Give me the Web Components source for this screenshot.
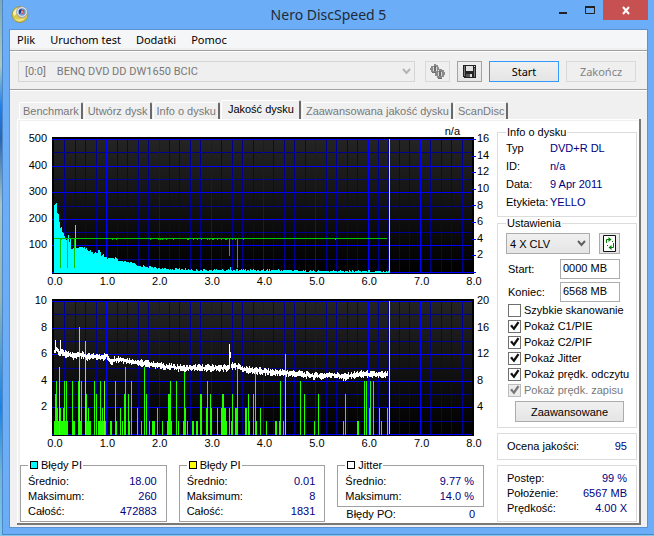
<!DOCTYPE html>
<html lang="pl">
<head>
<meta charset="utf-8">
<title>Nero DiscSpeed 5</title>
<style>
  html {
    --frame: #6badf6;
    --face: #f0f0f0;
    --value: #000080;
    --muted: #787878;
    --line: #dcdcdc;
    --ui: "Noto Sans", "Open Sans", sans-serif;
    --small: "Liberation Sans", Arial, sans-serif;
  }
  body {
    background: linear-gradient(#7aa9bb, #a9c9c0 12%, #1b7ff0 20%, #2a65b0 26%, #a4c4c6 38%, #8fb5b8 56%, #1584ea 76%, #6db3d6 88%, #7cc8ee);
    font: 11px/14px var(--small);
    margin: 0;
  }
</style>
</head>
<body>
<disc-window></disc-window>

<script>
class DiscWindow extends HTMLElement {
  connectedCallback() {
    this.attachShadow({ mode: "open" }).innerHTML = `
    <style>
    :host {
      background: var(--frame);
      border-bottom: 1px solid #4f86c4;
      border-left: 1px solid #4f86c4;
      box-sizing: border-box;
      display: flex;
      flex-direction: column;
      margin: 0 0 1px 2px;
      min-height: calc(100vh - 1px);
      padding: 0 6px 6px;
    }
    .client {
      background: var(--face);
      border: 1px solid #5c92d0;
      display: flex;
      flex: 1;
      flex-direction: column;
    }
    .page {
      background: #fff;
      border-bottom: 2px solid #787878;
      border-right: 2px solid #787878;
      box-shadow: inset 1px 1px #fff, inset 3px 2px var(--face);
      display: flex;
      flex: 1;
      gap: 7px;
      margin: 0 6px 2px 7px;
      padding: 2px 2px 1px 3px;
    }
    .results {
      flex: 1;
    }
    .caption {
      line-height: 16px;
      padding: 2px 30px 0 0;
      text-align: right;
      height: 14px;
    }
    .totals {
      display: grid;
      gap: 12px;
      grid-template-columns: repeat(3, 1fr);
      margin: 9px 6px 0 0;
    }
    .failures {
      padding: 0 9px;
    }
    scan-chart + scan-chart {
      margin-top: 11px;
    }
    </style>
    <title-bar></title-bar>
    <div class="client">
      <menu-bar></menu-bar>
      <drive-bar></drive-bar>
      <tab-strip></tab-strip>
      <main class="page">
        <div class="results">
          <div class="caption">n/a</div>
          <scan-chart kind="pie" left="500,400,300,200,100" right="16,14,12,10,8,6,4,2"></scan-chart>
          <scan-chart kind="pif" left="10,8,6,4,2" right="20,16,12,8,4"></scan-chart>
          <div class="totals">
            <group-box swatch="#00ffff">
              <span slot="title">Błędy PI</span>
              <value-row label="Średnio:">18.00</value-row>
              <value-row label="Maksimum:">260</value-row>
              <value-row label="Całość:">472883</value-row>
            </group-box>
            <group-box swatch="#ffff00">
              <span slot="title">Błędy PI</span>
              <value-row label="Średnio:">0.01</value-row>
              <value-row label="Maksimum:">8</value-row>
              <value-row label="Całość:">1831</value-row>
            </group-box>
            <div>
              <group-box swatch="#ffffff">
                <span slot="title">Jitter</span>
                <value-row label="Średnio:">9.77 %</value-row>
                <value-row label="Maksimum:">14.0 %</value-row>
              </group-box>
              <div class="failures"><value-row label="Błędy PO:">0</value-row></div>
            </div>
          </div>
        </div>
        <side-panel></side-panel>
      </main>
    </div>
  `;
  }
}

class TitleBar extends HTMLElement {
  connectedCallback() {
    this.attachShadow({ mode: "open" }).innerHTML = `
    <style>
    :host {
      align-items: start;
      color: #1f2a38;
      display: grid;
      grid-template-columns: 1fr auto 1fr;
      height: 29px;
    }
    .logo {
      height: 18px;
      margin: 5px 0 0 2px;
      width: 18px;
    }
    h1 {
      font: 400 14px/30px var(--ui);
      margin: 0;
    }
    .controls {
      display: flex;
      justify-content: flex-end;
    }
    button {
      background: none;
      border: 0;
      height: 20px;
      padding: 0;
      width: 27px;
    }
    .close {
      background: #c75050;
      width: 45px;
    }
    svg {
      display: block;
      margin: auto;
    }
    </style>
    <svg class="logo" viewBox="0 0 18 18">
      <circle cx="9" cy="9.500" r="8" fill="#d9c84a" stroke="#8c7f2c" stroke-width=".6"/>
      <path d="M2 8a7 7 0 0 1 6-5l-1 5-4 3z" fill="#f7f0a8"/>
      <path d="M3 13q4 3 11 0-4 5-9 2z" fill="#f2ea9c"/>
      <circle cx="11" cy="7" r="5.400" fill="#e6e9f2" stroke="#8890a8" stroke-width=".8"/>
      <circle cx="11" cy="7" r="3.800" fill="#7595d3"/>
      <path d="M8 5l3-1-1 4-2 1z" fill="#203c8e"/>
      <path d="M10 5l3 0-1 4-2-1z" fill="#d43d37"/>
      <path d="M13 5l1 2-2 3z" fill="#46a58d"/>
      <circle cx="11" cy="7" r=".8" fill="#fff"/>
    </svg>
    <h1>Nero DiscSpeed 5</h1>
    <div class="controls">
      <button aria-label="Minimalizuj"><svg width="8" height="20"><path d="M0 13h8" stroke="#222" stroke-width="2"/></svg></button>
      <button aria-label="Maksymalizuj"><svg width="10" height="20"><path d="M.5 7v6.500h9V7" fill="none" stroke="#222"/><path d="M0 7h10" stroke="#222" stroke-width="2"/></svg></button>
      <button class="close" aria-label="Zamknij"><svg width="8" height="20"><path d="M1 7l6 7M7 7l-6 7" stroke="#fff" stroke-width="2"/></svg></button>
    </div>
  `;
  }
}

class MenuBar extends HTMLElement {
  connectedCallback() {
    this.attachShadow({ mode: "open" }).innerHTML = `
    <style>
    :host {
      background: #f5f6f7;
      border-bottom: 1px solid #a0a0a0;
      box-shadow: inset 0 -2px #eeeff0;
      display: flex;
      gap: 15px;
      padding: 0 7px;
    }
    button {
      background: none;
      border: 0;
      color: #000;
      font: 11px/20px var(--ui);
      padding: 0;
    }
    </style>
    <button>Plik</button>
    <button>Uruchom test</button>
    <button>Dodatki</button>
    <button>Pomoc</button>
  `;
  }
}

class DriveBar extends HTMLElement {
  connectedCallback() {
    this.attachShadow({ mode: "open" }).innerHTML = `
    <style>
    :host {
      border-bottom: 1px solid #a0a0a0;
      border-top: 1px solid #fff;
      box-shadow: 0 1px #fff;
      display: flex;
      font-family: var(--ui);
      gap: 7px;
      padding: 9px 11px 7px 8px;
    }
    .drive {
      display: grid;
      flex: 1;
      margin-right: 3px;
    }
    .drive > * {
      grid-area: 1 / 1;
    }
    select {
      appearance: none;
      background: #efefef;
      border: 1px solid #d5d5d5;
      color: var(--muted);
      font: 11px/19px Roboto, sans-serif;
      height: 21px;
      opacity: 1;
      padding: 0 6px;
      white-space: pre;
    }
    .arrow {
      align-self: center;
      justify-self: end;
      margin-right: 4px;
      pointer-events: none;
    }
    button {
      background: linear-gradient(#f0f0f0, #e5e5e5);
      border: 1px solid #a3a3a3;
      box-sizing: border-box;
      color: #000;
      font: 11px/19px var(--ui);
      height: 21px;
      padding: 0;
      width: 25px;
    }
    button:disabled {
      background: #efefef;
      border-color: #d9d9d9;
      color: #838383;
    }
    .wide {
      width: 70px;
    }
    .start {
      border-color: #3399ff;
    }
    svg {
      display: block;
      margin: auto;
    }
    </style>
    <div class="drive">
      <select aria-label="Napęd" disabled><option>[0:0]&nbsp;&nbsp;&nbsp; BENQ DVD DD DW1650 BCIC</option></select>
      <svg class="arrow" width="9" height="7"><path d="M1 1l3.500 4L8 1" fill="none" stroke="#b4b4b4" stroke-width="2"/></svg>
    </div>
    <button disabled aria-label="Opcje">
      <svg width="17" height="17" viewBox="0 0 17 17" shape-rendering="crispEdges">
        <path d="M5 1h2v1h2v2h1v2l-1 3-2 1H4V9H2V7H1V5h1V3h3z" fill="#8a8a8a"/>
        <path d="M10 6h3v1h2v2h1v3h-1v2h-2v2h-3v-1H8v-2H6v-3h1V8h3z" fill="#8a8a8a"/>
        <path d="M4 4h1v4H4zM7 4h1v4H7zM9 9h1v4H9zM12 9h1v4h-1z" fill="#d8d8d8"/>
        <path d="M5 3h2v5H5zM10 8h2v5h-2zM3 9h4v1H3zM9 15h4v1H9z" fill="#6d6d6d"/>
      </svg>
    </button>
    <button aria-label="Zapisz">
      <svg width="13" height="13" viewBox="0 0 13 13" shape-rendering="crispEdges">
        <path d="M0 0h13v13H1v-1H0z" fill="#222"/>
        <path d="M1 1h1v10H1zM11 3h1v9h-1z" fill="#777"/>
        <path d="M3 1h7v5H3zM11 1h1v1h-1z" fill="#e2e2e2"/>
        <path d="M3 9h6v3H3z" fill="#555"/>
        <path d="M7 9h2v3H7z" fill="#ddd"/>
      </svg>
    </button>
    <button class="wide start">Start</button>
    <button class="wide" disabled>Zakończ</button>
  `;
  }
}

class TabStrip extends HTMLElement {
  connectedCallback() {
    this.attachShadow({ mode: "open" }).innerHTML = `
    <style>
    :host {
      align-items: flex-end;
      display: flex;
      gap: 1px;
      padding: 10px 8px 0 9px;
    }
    button {
      background: var(--face);
      border: solid;
      border-color: #fff #696969 #fff #fff;
      border-width: 1px 2px 0 1px;
      border-radius: 2px 2px 0 0;
      color: var(--muted);
      font: 11px/16px var(--small);
      padding: 0 2px 0 3px;
      white-space: nowrap;
    }
    [aria-selected="true"] {
      color: #000;
      padding: 0 5px 2px 6px;
    }
    </style>
    <button role="tab">Benchmark</button>
    <button role="tab">Utwórz dysk</button>
    <button role="tab">Info o dysku</button>
    <button role="tab" aria-selected="true">Jakość dysku</button>
    <button role="tab">Zaawansowana jakość dysku</button>
    <button role="tab">ScanDisc</button>
  `;
  }
}

class GroupBox extends HTMLElement {
  connectedCallback() {
    const swatch = this.getAttribute("swatch");
    this.attachShadow({ mode: "open" }).innerHTML = `
    <style>
    :host {
      display: block;
    }
    fieldset {
      border: 1px solid ${swatch ? "#a0a0a0" : "var(--line)"};
      margin: 0;
      min-width: 0;
      padding: ${swatch ? "3px 9px 2px 7px" : "1px 8px 5px"};
    }
    legend {
      align-items: center;
      display: flex;
      gap: 3px;
      height: 12px;
      line-height: 12px;
      padding: 0 1px;
    }
    i {
      background: ${swatch};
      border: 1px solid #000;
      height: 6px;
      margin-left: 1px;
      width: 6px;
    }
    </style>
    <fieldset>
      <legend>${swatch ? "<i></i>" : ""}<slot name="title"></slot></legend>
      <slot></slot>
    </fieldset>
  `;
  }
}

class ValueRow extends HTMLElement {
  connectedCallback() {
    this.attachShadow({ mode: "open" }).innerHTML = `
    <style>
    :host {
      display: flex;
      justify-content: space-between;
      line-height: 15px;
    }
    .value {
      color: var(--value);
    }
    </style>
    <span>${this.getAttribute("label")}</span>
    <span class="value"><slot></slot></span>
  `;
  }
}

class CheckOption extends HTMLElement {
  connectedCallback() {
    const state = ["checked", "disabled"].filter((name) => this.hasAttribute(name)).join(" ");
    this.attachShadow({ mode: "open" }).innerHTML = `
    <style>
    :host {
      display: block;
      white-space: nowrap;
    }
    label {
      align-items: center;
      display: flex;
      gap: 3px;
      line-height: 16px;
    }
    input {
      appearance: none;
      background: #fff;
      border: 1px solid #707070;
      box-sizing: border-box;
      flex: none;
      height: 13px;
      margin: 0;
      width: 13px;
    }
    input:checked::before {
      background: #111;
      clip-path: polygon(10% 50%, 28% 36%, 42% 58%, 78% 8%, 95% 20%, 46% 92%);
      content: "";
      display: block;
      height: 11px;
      width: 11px;
    }
    input:disabled {
      background: #ececec;
      border-color: #bcbcbc;
    }
    input:disabled::before {
      background: #777;
    }
    input:disabled + span {
      color: var(--muted);
    }
    </style>
    <label><input type="checkbox" ${state}><span><slot></slot></span></label>
  `;
  }
}

class SidePanel extends HTMLElement {
  connectedCallback() {
    this.attachShadow({ mode: "open" }).innerHTML = `
    <style>
    :host {
      display: block;
      padding-top: 5px;
      width: 140px;
    }
    dl {
      display: grid;
      grid-template-columns: 44px 1fr;
      line-height: 18px;
      margin: 0;
    }
    dd {
      color: var(--value);
      margin: 0;
    }
    .speed {
      display: flex;
      gap: 9px;
      margin-top: 3px;
    }
    .pick {
      display: grid;
      width: 84px;
    }
    .pick > * {
      grid-area: 1 / 1;
    }
    select, button, input {
      background: linear-gradient(#f0f0f0, #e5e5e5);
      border: 1px solid #acacac;
      box-sizing: border-box;
      color: #000;
      font: 11px/14px var(--small);
      height: 21px;
      padding: 0 3px;
    }
    select {
      appearance: none;
    }
    .arrow {
      align-self: center;
      justify-self: end;
      margin-right: 4px;
      pointer-events: none;
    }
    .refresh {
      padding: 0;
      width: 21px;
    }
    .refresh svg {
      display: block;
      margin: auto;
    }
    .range {
      align-items: center;
      display: grid;
      gap: 3px 0;
      grid-template-columns: 52px 60px;
      margin: 5px 0 0 2px;
    }
    input {
      background: #fff;
      height: 20px;
      padding: 0 2px 2px;
    }
    .options {
      margin: 0 0 0 2px;
    }
    .more {
      display: block;
      margin: 3px 4px 0 9px;
      width: 109px;
    }
    .box {
      border: 1px solid var(--line);
      margin-top: 5px;
      padding: 5px 9px;
    }
    </style>
    <group-box>
      <span slot="title">Info o dysku</span>
      <dl>
        <dt>Typ</dt><dd>DVD+R DL</dd>
        <dt>ID:</dt><dd>n/a</dd>
        <dt>Data:</dt><dd>9 Apr 2011</dd>
        <dt>Etykieta:</dt><dd>YELLO</dd>
      </dl>
    </group-box>
    <group-box>
      <span slot="title">Ustawienia</span>
      <div class="speed">
        <div class="pick">
          <select aria-label="Prędkość"><option>4 X CLV</option></select>
          <svg class="arrow" width="9" height="7"><path d="M1 1l3.500 4L8 1" fill="none" stroke="#606060" stroke-width="2"/></svg>
        </div>
        <button class="refresh" aria-label="Odśwież">
          <svg width="15" height="17" viewBox="0 0 15 17">
            <path d="M1.500 .5h12v16h-12z" fill="#fff" stroke="#111"/>
            <path d="M4.500 8V4.500H7M11.500 8v4.500H9" fill="none" stroke="#008000"/>
            <path d="M6.500 2v5l3-2.500zM9.500 10v5l-3-2.500z" fill="#008000"/>
            <path d="M10 6h1v1h-1zM5 10h1v1H5z" fill="#008000"/>
          </svg>
        </button>
      </div>
      <div class="range">
        <label for="from">Start:</label><input id="from" value="0000 MB">
        <label for="to">Koniec:</label><input id="to" value="6568 MB">
      </div>
      <div class="options">
        <check-option>Szybkie skanowanie</check-option>
        <check-option checked>Pokaż C1/PIE</check-option>
        <check-option checked>Pokaż C2/PIF</check-option>
        <check-option checked>Pokaż Jitter</check-option>
        <check-option checked>Pokaż prędk. odczytu</check-option>
        <check-option checked disabled>Pokaż prędk. zapisu</check-option>
      </div>
      <button class="more">Zaawansowane</button>
    </group-box>
    <div class="box">
      <value-row label="Ocena jakości:">95</value-row>
    </div>
    <div class="box">
      <value-row label="Postęp:">99 %</value-row>
      <value-row label="Położenie:">6567 MB</value-row>
      <value-row label="Prędkość:">4.00 X</value-row>
    </div>
  `;
  }
}

// Outline of the PI error area, as x,y pairs in plot units
const PIE = [2,68, 3,67, 4,66, 5,76, 6,77, 7,85, 8,91, 9,90, 10,95, 11,96, 12,99, 14,103, 16,98, 17,105, 18,102, 19,112, 21,111, 24,112, 28,111, 30,109, 33,112, 38,113, 41,116, 45,115, 47,113, 49,120, 51,118, 55,121, 58,122, 63,121, 66,124, 73,125, 80,126, 85,129, 91,129, 98,130, 105,131, 115,132, 128,132, 141,133, 232,133, 258,134, 337,134];

// Centre line of the jitter trace
const JITTER = [2,52, 3,44, 4,50, 6,53, 7,53, 8,43, 9,53, 12,55, 21,57, 26,55, 35,58, 48,58, 54,57, 58,62, 65,60, 81,63, 98,65, 115,68, 131,69, 175,69, 176,68, 177,47, 178,57, 179,67, 185,67, 190,70, 215,73, 231,74, 248,75, 261,77, 281,76, 291,78, 308,75, 335,76];

// PIF bars, x:height
const PIF = "2:1 3:3 4:4 5:2 6:1 7:5 8:2 9:1 10:1 11:2 12:4 13:1 14:4 15:1 20:4 21:1 22:1 26:4 27:8 28:1 29:4 33:7 34:3 35:1 36:2 37:1 38:1 42:4 44:3 46:1 47:1 48:4 49:1 50:2 51:1 52:4 53:1 58:1 59:1 63:4 64:1 68:2 70:1 72:3 73:5 76:3 77:1 79:4 85:2 89:1 92:5 94:3 97:1 100:1 101:1 102:1 105:2 110:1 115:1 116:3 117:3 118:4 119:1 124:4 126:1 131:1 132:5 133:2 135:1 140:1 141:1 144:1 145:1 148:3 149:3 154:2 155:4 158:3 159:2 165:2 169:2 170:3 171:3 172:2 173:2 174:1 177:2 179:1 180:3 183:2 184:2 185:5 193:2 194:2 196:3 197:1 201:3 203:5 204:1 208:2 214:1 223:1 224:1 227:1 228:4 231:1 233:6 248:4 252:3 262:1 266:3 291:1 293:3 305:1 306:1 312:4 314:4 317:2 318:4 321:4 327:2 329:1 335:2";

function valueAt(points, x) {
  let i = 0;
  while (i < points.length - 4 && points[i + 2] < x) i += 2;
  const [x0, y0, x1, y1] = points.slice(i, i + 4);
  return y0 + ((y1 - y0) * (x - x0)) / (x1 - x0);
}

function noise(x) {
  const n = Math.sin(x * 12.9898) * 43758.5453;
  return n - Math.floor(n);
}

function bar(x, top, bottom) {
  return `M${x} ${top}h1V${bottom}h-1z`;
}

class ScanChart extends HTMLElement {
  connectedCallback() {
    const pie = this.getAttribute("kind") === "pie";
    const cells = (list) => list.split(",").map((text) => `<span>${text}</span>`).join("");
    this.attachShadow({ mode: "open" }).innerHTML = `
    <style>
    :host {
      display: grid;
      grid-template-columns: 32px 1fr 16px;
    }
    svg {
      display: block;
      height: 137px;
      overflow: visible;
      width: 100%;
    }
    .axis {
      display: flex;
      flex-direction: column;
      height: 133px;
      margin-top: -6px;
    }
    .axis span {
      flex: 1;
    }
    .left {
      padding-right: 5px;
      text-align: right;
    }
    .right {
      padding-left: 3px;
    }
    .bottom {
      display: flex;
      grid-column: 2;
      justify-content: space-between;
      line-height: 14px;
      margin: 0 0 0 3px;
    }
    .bottom span {
      display: flex;
      justify-content: center;
      width: 0;
    }
    </style>
    <div class="axis left">${cells(this.getAttribute("left"))}</div>
    <svg viewBox="0 0 422 137" preserveAspectRatio="none" shape-rendering="crispEdges">
      <defs>
        <linearGradient id="shade" x2="0" y2="1">
          <stop stop-color="#242424"/>
          <stop offset="1" stop-color="#000"/>
        </linearGradient>
      </defs>
      <path d="M0 0h422v137H0z"/>
      <path d="M2 2h418v133H2z" fill="url(#shade)"/>
      ${this.grid(pie)}
      ${pie ? this.pie() : this.pif()}
      <path d="${bar(337, 2, 135)}" fill="#d4d4e8"/>
    </svg>
    <div class="axis right">${cells(this.getAttribute("right"))}</div>
    <div class="bottom">${cells("0.0,1.0,2.0,3.0,4.0,5.0,6.0,7.0,8.0")}</div>
  `;
  }

  grid(ticks) {
    let minor = "";
    let major = "";
    for (let i = 1; i < 40; i++) {
      const x = Math.round(2 + i * 10.45);
      if (i % 5) minor += bar(x, 2, 135);
      else major += bar(x, 2, 135);
    }
    for (let i = 0; i <= 10; i++) {
      const y = Math.round(2 + i * 13.3);
      if (i % 2) minor += `M2 ${y}h418v1H2z`;
      else major += `M0 ${y}h420v1H0z`;
    }
    if (ticks) {
      for (let i = 0; i <= 8; i++) major += `M420 ${Math.round(2 + i * 16.6)}h4v1h-4z`;
    }
    return `<path d="${minor}" fill="#000090"/><path d="${major}" fill="#0000ff"/>`;
  }

  pie() {
    let area = "";
    for (let x = 2; x < 338; x++) {
      const spread = x < 20 ? 0 : x < 60 ? 3 : 2;
      area += bar(x, Math.round(valueAt(PIE, x) + (noise(x) - 0.5) * spread), 136);
    }
    area += bar(23, 88, 136) + bar(178, 130, 136);
    let speed = "M2 101h333v1H2z";
    speed += bar(8, 101, 131) + bar(15, 101, 131) + bar(22, 101, 131) + bar(177, 101, 119) + bar(185, 101, 131);
    for (const x of [9, 60, 64, 98, 106, 108, 110, 114, 121, 135, 136, 141, 145, 149, 155, 157, 160, 161, 165, 169, 173, 174, 180, 183, 191, 283]) {
      speed += bar(x, 102, 103);
    }
    return `<path d="${area}" fill="#00ffff"/><path d="${speed}" fill="#00c800"/>`;
  }

  pif() {
    let bars = "";
    let peaks = "";
    for (const item of PIF.split(" ")) {
      const [x, count] = item.split(":").map(Number);
      const shape = bar(x, Math.round(135.4 - count * 13.4), 136);
      if (count > 5 || x === 7 || x === 52) peaks += shape;
      else bars += shape;
    }
    let trace = "";
    let last = valueAt(JITTER, 2);
    for (let x = 2; x < 336; x++) {
      const y = valueAt(JITTER, x);
      const top = y - 1 - noise(x) * 3;
      const bottom = Math.max(y, last) + 1 + noise(x + 500) * 3;
      trace += bar(x, Math.round(top), Math.round(bottom));
      last = y;
    }
    return `<path d="${bars}" fill="#1fff00"/><path d="${peaks}" fill="#70ff10"/><path d="${trace}" fill="#fff"/>`;
  }
}

customElements.define("title-bar", TitleBar);
customElements.define("menu-bar", MenuBar);
customElements.define("drive-bar", DriveBar);
customElements.define("tab-strip", TabStrip);
customElements.define("group-box", GroupBox);
customElements.define("value-row", ValueRow);
customElements.define("check-option", CheckOption);
customElements.define("side-panel", SidePanel);
customElements.define("scan-chart", ScanChart);
customElements.define("disc-window", DiscWindow);
</script>
</body>
</html>
